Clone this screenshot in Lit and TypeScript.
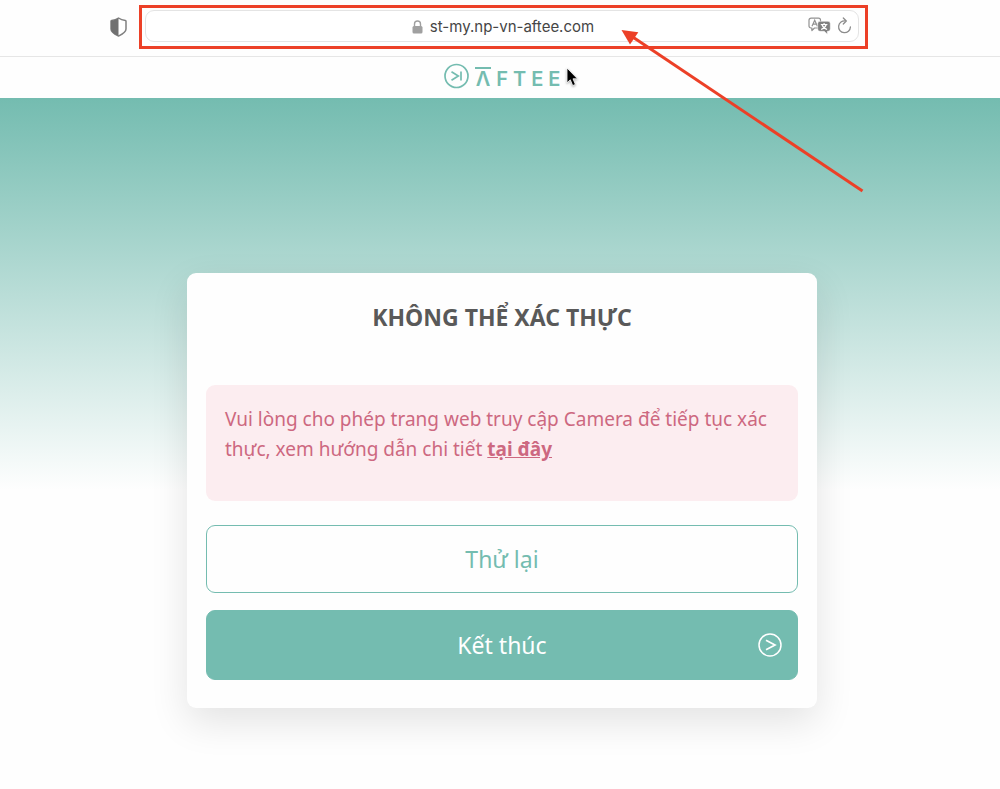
import { LitElement, html, css } from "lit";
import { customElement } from "lit/decorators.js";

@customElement("browser-toolbar")
class BrowserToolbar extends LitElement {
  static styles = css`
    :host {
      display: block;
      background: #fefefe;
      border-bottom: 1px solid #e6e6e6;
    }
    .toolbar {
      display: flex;
      align-items: center;
      gap: 12px;
      padding: 5px 132px 7px 110px;
    }
    .icon {
      display: flex;
      padding: 0;
      border: 0;
      background: none;
    }
    .frame {
      position: relative;
      flex: 1;
      padding: 2px 6px 4px 3px;
      border: 3px solid #ec4027;
    }
    .address {
      display: grid;
      grid-template-columns: 1fr auto 1fr;
      align-items: center;
      height: 30px;
      border: 1px solid #e4e4e4;
      border-radius: 9px;
      background: #fff;
    }
    .site {
      grid-column: 2;
      display: flex;
      align-items: center;
      gap: 7px;
      padding: 2px 0 0 2px;
    }
    .url {
      field-sizing: content;
      padding: 0;
      border: 0;
      outline: 0;
      background: none;
      color: #454545;
      font: 15px/20px Inter, sans-serif;
    }
    .tools {
      display: flex;
      justify-content: flex-end;
      align-items: center;
      gap: 6px;
      padding-right: 6px;
    }
    .arrow {
      position: absolute;
      top: 17px;
      right: -3px;
      z-index: 2;
      pointer-events: none;
    }
  `;

  render() {
    return html`
      <div class="toolbar">
        <button class="icon" aria-label="Privacy report">
          <svg width="17" height="20" viewBox="0 0 17 20">
            <path d="M8.5 1 C6.5 2.4 4 3.2 1.6 3.5 Q1 3.6 1 4.3 V12 C1 15.5 5 17.3 8.5 19 C12 17.3 16 15.5 16 12 V4.3 Q16 3.6 15.4 3.5 C13 3.2 10.5 2.4 8.5 1Z" fill="#fff" stroke="#808080" stroke-width="1.5" stroke-linejoin="round" />
            <path d="M8.5 1 C6.5 2.4 4 3.2 1.6 3.5 Q1 3.6 1 4.3 V12 C1 15.5 5 17.3 8.5 19Z" fill="#707070" />
          </svg>
        </button>
        <div class="frame">
          <div class="address">
            <label class="site">
              <svg width="11" height="14" viewBox="0 0 11 14" role="img" aria-label="Secure address">
                <path d="M2.5 7 V4 a3 3 0 0 1 6 0 V7" fill="none" stroke="#a0a0a0" stroke-width="1.4" />
                <rect x="0.5" y="6" width="10" height="7.5" rx="1.5" fill="#a0a0a0" />
              </svg>
              <input class="url" type="text" value="st-my.np-vn-aftee.com" />
            </label>
            <div class="tools">
              <button class="icon" aria-label="Translate">
                <svg width="23" height="18" viewBox="0 0 23 18">
                  <path d="M3 1.2 H10.5 a2 2 0 0 1 2 2 V9 a2 2 0 0 1 -2 2 H6.5 L3.9 13.5 V11 H3 a2 2 0 0 1 -2 -2 V3.2 a2 2 0 0 1 2 -2Z" fill="#fff" stroke="#929292" stroke-width="1.2" stroke-linejoin="round" />
                  <path d="M4 9.2 L6.7 3.2 L9.4 9.200 M5 7.200 H8.400" fill="none" stroke="#929292" stroke-width="1.200" />
                  <path d="M12 4.300 H20 a2.300 2.300 0 0 1 2.300 2.300 V12 a2.300 2.300 0 0 1 -2.300 2.300 H19.300 V17.200 L16.300 14.300 H12 a2.300 2.300 0 0 1 -2.300 -2.300 V6.600 a2.300 2.300 0 0 1 2.300 -2.300Z" fill="#808080" stroke="#fff" stroke-width="0.500" />
                  <path d="M12.800 7.500 H19.400 M16.100 5.900 V7.500 M14 7.800 C14.800 10 16.600 11.700 19.100 12.500 M18.200 7.800 C17.400 10 15.600 11.700 13.100 12.500" fill="none" stroke="#fff" stroke-width="1.200" />
                </svg>
              </button>
              <button class="icon" aria-label="Reload">
                <svg width="15" height="18" viewBox="0 0 15 18">
                  <path d="M8.500 4 A5.900 5.900 0 1 0 13.400 10" fill="none" stroke="#8c8c8c" stroke-width="1.300" stroke-linecap="round" />
                  <path d="M6.300 1 L9.300 4 L6.300 7" fill="none" stroke="#8c8c8c" stroke-width="1.300" stroke-linecap="round" stroke-linejoin="round" />
                </svg>
              </button>
            </div>
          </div>
          <svg class="arrow" width="250" height="170" viewBox="0 0 250 170" aria-hidden="true">
            <path d="M14 11.500 L244.500 166" stroke="#ec4027" stroke-width="3" />
            <path d="M3.500 5 L20.300 7.300 L12 19.500Z" fill="#ec4027" />
          </svg>
        </div>
      </div>
    `;
  }
}

@customElement("brand-header")
class BrandHeader extends LitElement {
  static styles = css`
    :host {
      display: block;
      background: #fefefe;
    }
    .bar {
      display: flex;
      justify-content: center;
      align-items: center;
      height: 38px;
      padding: 0 0 3px 4px;
    }
    .brand {
      position: relative;
      display: flex;
      align-items: flex-end;
      gap: 6px;
      color: #74bcb0;
      text-decoration: none;
    }
    .word {
      display: flex;
      align-items: flex-end;
      gap: 5px;
      font: 600 20px/20px Inter, sans-serif;
    }
    .first {
      border-top: 2px solid #74bcb0;
      padding: 0 1px;
    }
    .cursor {
      position: absolute;
      left: 100%;
      top: 4px;
      margin-left: 6px;
      filter: drop-shadow(0 1px 1px #0005);
    }
  `;

  render() {
    return html`
      <header class="bar">
        <a class="brand" href="#" aria-label="AFTEE">
          <svg width="25" height="26" viewBox="0 0 25 26">
            <circle cx="12.5" cy="13" r="11.5" fill="none" stroke="#74bcb0" stroke-width="1.7" />
            <path d="M7.5 8.8 L14.3 13 L7.5 17.2 M17 8.5 V17.5" fill="none" stroke="#74bcb0" stroke-width="1.7" />
          </svg>
          <span class="word"><span class="first">Λ</span><span>F</span><span>T</span><span>E</span><span>E</span></span>
          <svg class="cursor" width="13" height="20" viewBox="0 0 13 20" aria-hidden="true">
            <path d="M1 1 V15.8 L4.3 12.8 L6.7 18.6 L9.4 17.4 L7 11.8 H11.5Z" fill="#000" stroke="#fff" stroke-width="0.8" />
          </svg>
        </a>
      </header>
    `;
  }
}

@customElement("app-root")
class AppRoot extends LitElement {
  static styles = css`
    :host {
      display: flex;
      flex-direction: column;
      min-height: 100vh;
      background: #fefefe;
      font-family: "Noto Sans", sans-serif;
    }
    .page {
      flex: 1;
      padding: 175px 16px 80px 20px;
      background: linear-gradient(#74bcb0, #fefefe 392px);
    }
    .card {
      box-sizing: border-box;
      max-width: 630px;
      margin: 0 auto;
      padding: 28px 19px;
      border-radius: 9px;
      background: #fefefe;
      box-shadow: 0 14px 38px #0000001c;
    }
    .title {
      margin: 0 0 52px;
      color: #595959;
      font-size: 23px;
      line-height: 32px;
      font-weight: 700;
      text-align: center;
    }
    .alert {
      margin: 0 0 24px;
      padding: 19px 19px 37px;
      border-radius: 9px;
      background: #fcedf0;
      color: #cd6880;
      font-size: 19px;
      line-height: 30px;
    }
    .link {
      color: inherit;
      font-weight: 700;
    }
    .actions {
      display: grid;
      gap: 17px;
    }
    .button {
      display: grid;
      grid-template-columns: 1fr auto 1fr;
      align-items: center;
      width: 100%;
      padding: 16px 15px;
      border: 1px solid #74bcb0;
      border-radius: 9px;
      background: #fefefe;
      color: #74bcb0;
      font: 23px/34px "Noto Sans", sans-serif;
    }
    .primary {
      padding: 17px 15px;
      background: #74bcb0;
      color: #fff;
    }
    .label {
      grid-column: 2;
    }
    .go {
      justify-self: end;
    }
  `;

  render() {
    return html`
      <browser-toolbar></browser-toolbar>
      <brand-header></brand-header>
      <main class="page">
        <section class="card">
          <h1 class="title">KHÔNG THỂ XÁC THỰC</h1>
          <p class="alert" role="alert">
            Vui lòng cho phép trang web truy cập Camera để tiếp tục xác thực, xem hướng dẫn chi tiết
            <a class="link" href="#">tại đây</a>
          </p>
          <div class="actions">
            <button class="button"><span class="label">Thử lại</span></button>
            <button class="button primary">
              <span class="label">Kết thúc</span>
              <svg class="go" width="24" height="24" viewBox="0 0 24 24" aria-hidden="true">
                <circle cx="12" cy="12" r="11" fill="none" stroke="#fff" stroke-width="1.5" />
                <path d="M8 7.3 L17 12 L8 16.7" fill="none" stroke="#fff" stroke-width="1.7" />
              </svg>
            </button>
          </div>
        </section>
      </main>
    `;
  }
}
